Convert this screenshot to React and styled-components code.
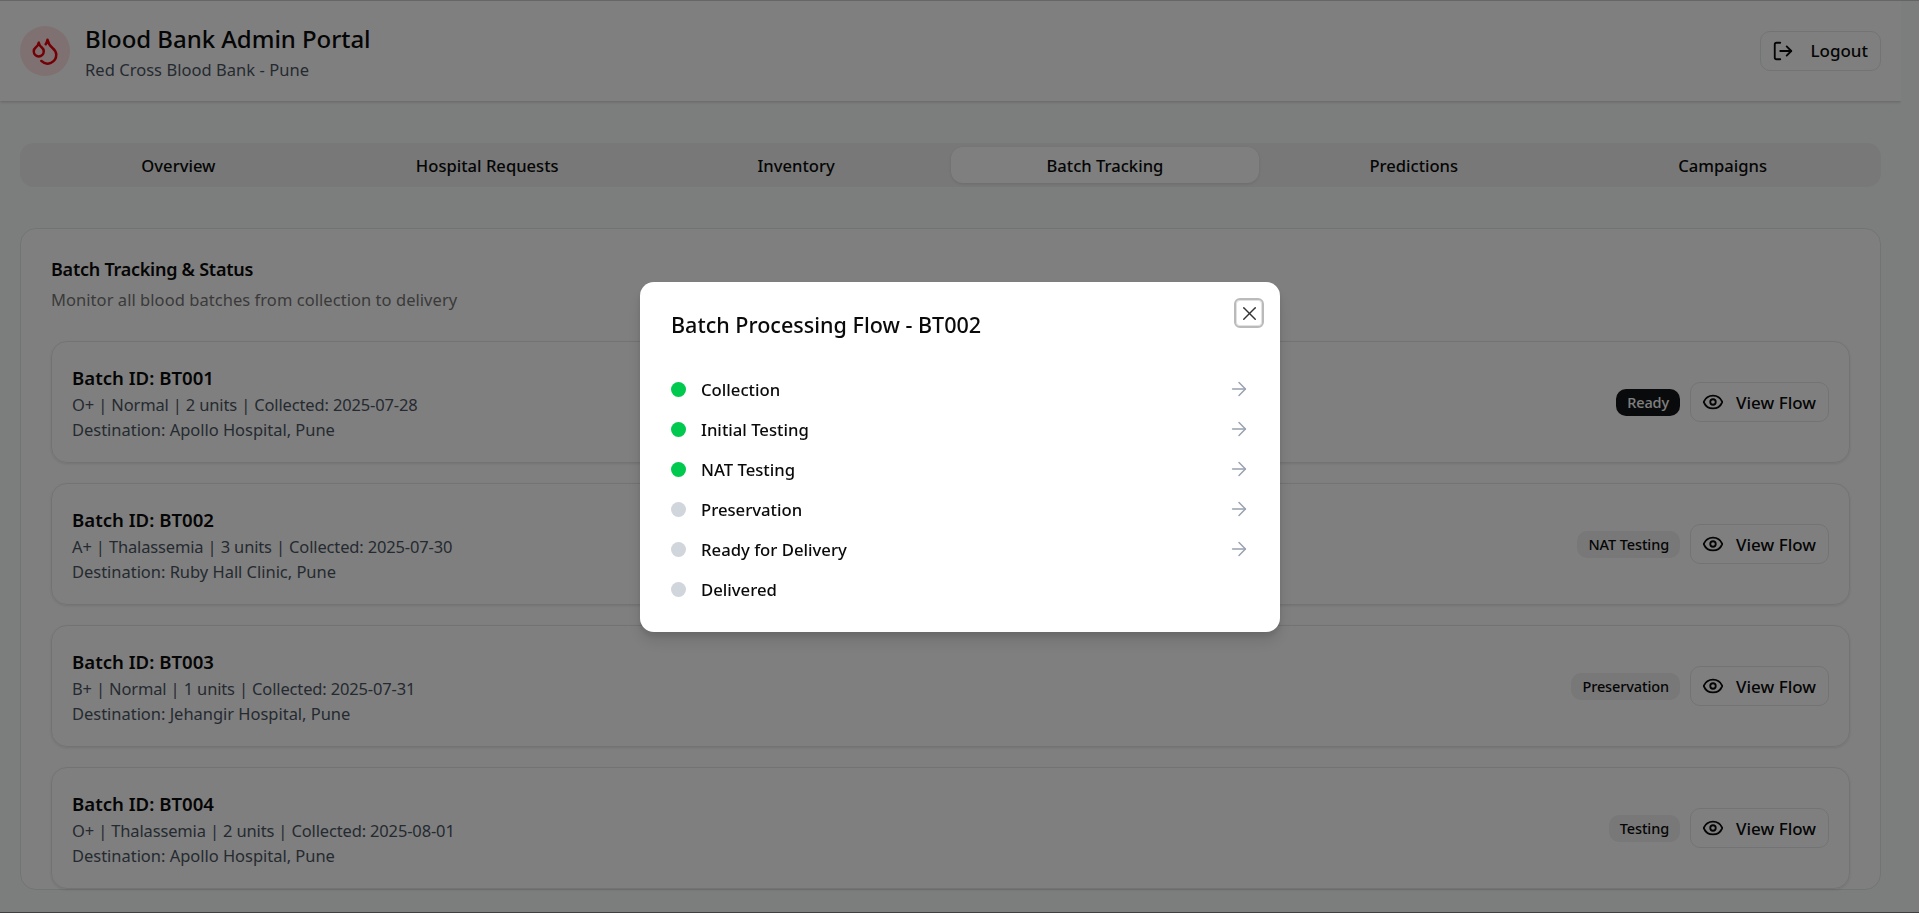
import styled, { createGlobalStyle } from "styled-components";
import { Droplets, LogOut, Eye, ArrowRight, X } from "lucide-react";

const GlobalStyle = createGlobalStyle`
  * {
    box-sizing: border-box;
  }
  html, body {
    margin: 0;
    height: 100%;
    overflow: hidden;
    background: #f9fbfa;
    font-family: "Noto Sans", sans-serif;
    color: #0a0a0a;
  }
`;

const Page = styled.div`
  width: 1901px;
  height: 913px;
  overflow: hidden;
`;

const Header = styled.header`
  height: 101px;
  background: #ffffff;
  box-shadow: 0 1px 3px rgba(0, 0, 0, 0.2);
  display: flex;
  align-items: center;
  justify-content: space-between;
  padding: 0 20px;
`;

const Brand = styled.div`
  display: flex;
  align-items: center;
  gap: 15px;
`;

const LogoCircle = styled.div`
  width: 50px;
  height: 50px;
  border-radius: 50%;
  background: #fee2e2;
  color: #e7000b;
  display: flex;
  align-items: center;
  justify-content: center;
`;

const BrandText = styled.div`
  display: flex;
  flex-direction: column;
  gap: 4px;
  padding-top: 3px;
`;

const BrandTitle = styled.h1`
  margin: 0;
  font-size: 24px;
  line-height: 32px;
  font-weight: 500;
  letter-spacing: -0.05px;
`;

const BrandSub = styled.p`
  margin: 0;
  font-size: 16.5px;
  line-height: 22px;
  color: #4b5563;
  letter-spacing: 0.04px;
`;

const OutlineButton = styled.button`
  display: flex;
  align-items: center;
  gap: ${({ $gap }) => $gap}px;
  height: 40px;
  padding: 0 12px 0 11px;
  background: #ffffff;
  border: 1px solid #e5e7eb;
  border-radius: 10px;
  font: 500 17px "Noto Sans", sans-serif;
  color: #0a0a0a;
`;

const Main = styled.main`
  padding: 42px 20px 0;
`;

const TabList = styled.div`
  display: grid;
  grid-template-columns: repeat(6, 1fr);
  height: 44px;
  padding: 4px;
  border-radius: 14px;
  background: #f0f0f0;
`;

const Tab = styled.div`
  display: flex;
  align-items: center;
  justify-content: center;
  border-radius: 12px;
  font-size: 16.6px;
  font-weight: 500;
  background: ${({ $active }) => ($active ? "#ffffff" : "transparent")};
  box-shadow: ${({ $active }) => ($active ? "0 1px 3px rgba(0, 0, 0, 0.1)" : "none")};
`;

const Panel = styled.section`
  margin-top: 41px;
  padding: 28px 30px 0;
  background: #ffffff;
  border: 1px solid #e5e7eb;
  border-radius: 16px;
`;

const PanelTitle = styled.h2`
  margin: 0;
  font-size: 18px;
  line-height: 24px;
  font-weight: 600;
  letter-spacing: -0.25px;
`;

const PanelSub = styled.p`
  margin: 7px 0 29px;
  font-size: 16.5px;
  line-height: 24px;
  color: #757575;
  letter-spacing: 0.05px;
`;

const BatchList = styled.div`
  display: flex;
  flex-direction: column;
  gap: 20px;
`;

const BatchCard = styled.article`
  height: 122px;
  padding: 0 20px;
  display: flex;
  align-items: center;
  justify-content: space-between;
  border: 1px solid #e5e7eb;
  border-radius: 16px;
  box-shadow: 0 1px 3px rgba(0, 0, 0, 0.1);
`;

const BatchInfo = styled.div`
  display: flex;
  flex-direction: column;
  padding-top: 1px;
`;

const BatchTitle = styled.h3`
  margin: 0;
  font-size: 18.6px;
  line-height: 28px;
  font-weight: 600;
`;

const BatchDetail = styled.p`
  margin: 0;
  font-size: 16.5px;
  line-height: 25px;
  color: #4b5563;
  letter-spacing: -0.15px;
`;

const BatchDestination = styled(BatchDetail)`
  letter-spacing: -0.03px;
`;

const BatchActions = styled.div`
  display: flex;
  align-items: center;
  gap: 10px;
`;

const Badge = styled.span`
  height: 27px;
  padding: 0 11px;
  display: flex;
  align-items: center;
  border-radius: 10px;
  font-size: 14.5px;
  font-weight: 500;
  letter-spacing: -0.1px;
  background: ${({ $dark }) => ($dark ? "#131416" : "#f0f0f0")};
  color: ${({ $dark }) => ($dark ? "#ffffff" : "#0a0a0a")};
`;

const Overlay = styled.div`
  position: fixed;
  inset: 0;
  background: rgba(0, 0, 0, 0.5);
  border-top: 1px solid rgba(0, 0, 0, 0.2);
  border-bottom: 1px solid rgba(0, 0, 0, 0.5);
`;

const Modal = styled.div`
  position: absolute;
  left: 640px;
  top: 281px;
  width: 640px;
  height: 350px;
  padding: 29px 32px 32px;
  background: #ffffff;
  border-radius: 14px;
  box-shadow: 0 10px 15px rgba(0, 0, 0, 0.1), 0 4px 6px rgba(0, 0, 0, 0.1);
`;

const ModalTitle = styled.h2`
  margin: 0 0 30px -1px;
  font-size: 21.55px;
  line-height: 28px;
  font-weight: 500;
`;

const CloseButton = styled.button`
  position: absolute;
  top: 16px;
  right: 16px;
  width: 30px;
  height: 30px;
  padding: 0;
  display: flex;
  align-items: center;
  justify-content: center;
  background: transparent;
  border: 2px solid #bababa;
  border-radius: 6px;
  box-shadow: inset 0 0 0 1px #e2e2e2;
  color: #333333;
`;

const StepList = styled.ul`
  margin: 0 0 0 -1px;
  padding: 0;
  list-style: none;
`;

const StepRow = styled.li`
  height: 40px;
  display: flex;
  align-items: center;
  gap: 15px;
  color: #0a0a0a;
`;

const StepDot = styled.span`
  width: 15px;
  height: 15px;
  flex: none;
  border-radius: 50%;
  background: ${({ $done }) => ($done ? "#00c950" : "#d1d5dc")};
`;

const StepName = styled.span`
  flex: 1;
  font-size: 16.7px;
  font-weight: 500;
`;

const StepArrow = styled(ArrowRight)`
  color: #99a1af;
  margin-right: -2px;
`;

const batches = [
  { id: "BT001", detail: "O+ | Normal | 2 units | Collected: 2025-07-28", dest: "Apollo Hospital, Pune", status: "Ready", dark: true },
  { id: "BT002", detail: "A+ | Thalassemia | 3 units | Collected: 2025-07-30", dest: "Ruby Hall Clinic, Pune", status: "NAT Testing" },
  { id: "BT003", detail: "B+ | Normal | 1 units | Collected: 2025-07-31", dest: "Jehangir Hospital, Pune", status: "Preservation" },
  { id: "BT004", detail: "O+ | Thalassemia | 2 units | Collected: 2025-08-01", dest: "Apollo Hospital, Pune", status: "Testing" },
];

const steps = [
  { name: "Collection", done: true },
  { name: "Initial Testing", done: true },
  { name: "NAT Testing", done: true },
  { name: "Preservation" },
  { name: "Ready for Delivery" },
  { name: "Delivered" },
];

const tabs = ["Overview", "Hospital Requests", "Inventory", "Batch Tracking", "Predictions", "Campaigns"];

export default function App() {
  return (
    <>
      <GlobalStyle />
      <Page>
        <Header>
          <Brand>
            <LogoCircle>
              <Droplets size={30} />
            </LogoCircle>
            <BrandText>
              <BrandTitle>Blood Bank Admin Portal</BrandTitle>
              <BrandSub>Red Cross Blood Bank - Pune</BrandSub>
            </BrandText>
          </Brand>
          <OutlineButton $gap={16}>
            <LogOut size={22} />
            Logout
          </OutlineButton>
        </Header>
        <Main>
          <TabList>
            {tabs.map((tab) => (
              <Tab key={tab} $active={tab === "Batch Tracking"}>
                {tab}
              </Tab>
            ))}
          </TabList>
          <Panel>
            <PanelTitle>Batch Tracking &amp; Status</PanelTitle>
            <PanelSub>Monitor all blood batches from collection to delivery</PanelSub>
            <BatchList>
              {batches.map((batch) => (
                <BatchCard key={batch.id}>
                  <BatchInfo>
                    <BatchTitle>Batch ID: {batch.id}</BatchTitle>
                    <BatchDetail>{batch.detail}</BatchDetail>
                    <BatchDestination>Destination: {batch.dest}</BatchDestination>
                  </BatchInfo>
                  <BatchActions>
                    <Badge $dark={batch.dark}>{batch.status}</Badge>
                    <OutlineButton $gap={12}>
                      <Eye size={22} />
                      View Flow
                    </OutlineButton>
                  </BatchActions>
                </BatchCard>
              ))}
            </BatchList>
          </Panel>
        </Main>
      </Page>
      <Overlay>
        <Modal>
          <ModalTitle>Batch Processing Flow - BT002</ModalTitle>
          <CloseButton>
            <X size={23} strokeWidth={1.5} />
          </CloseButton>
          <StepList>
            {steps.map((step, i) => (
              <StepRow key={step.name}>
                <StepDot $done={step.done} />
                <StepName>{step.name}</StepName>
                {i < steps.length - 1 && <StepArrow size={22} strokeWidth={1.6} />}
              </StepRow>
            ))}
          </StepList>
        </Modal>
      </Overlay>
    </>
  );
}
